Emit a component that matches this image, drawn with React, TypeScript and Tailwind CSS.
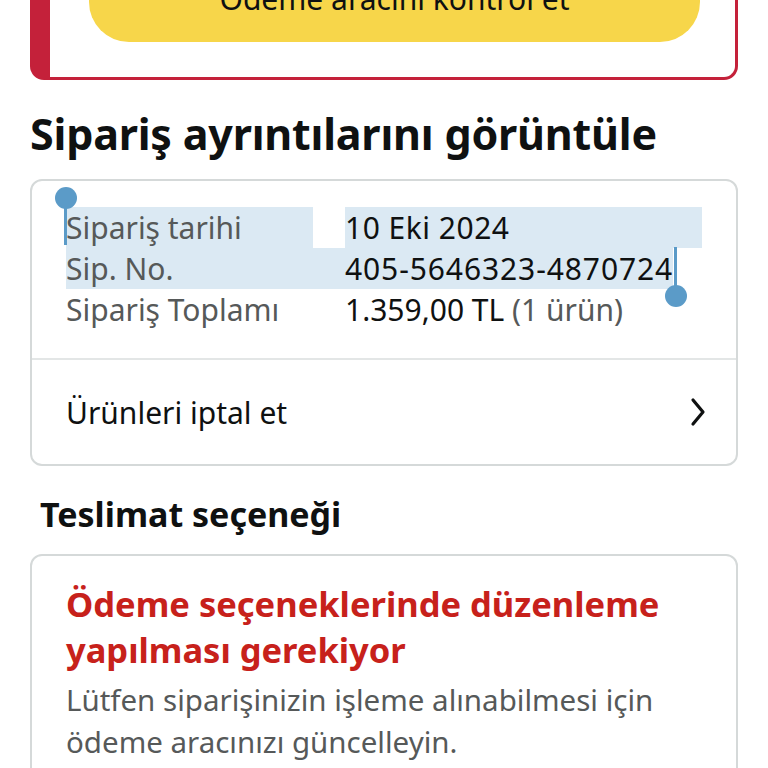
export default function App() {
  return (
    <div
      className="w-[768px] h-[768px] overflow-hidden bg-white px-[30px] text-[#0f1111]"
      style={{ fontFamily: '"Noto Sans", "Liberation Sans", sans-serif' }}
    >
      {/* payment alert (top is scrolled away) */}
      <div className="-mt-[40px] rounded-b-[14px] border-[3px] border-l-[20px] border-t-0 border-[#c4213a] pl-[39px] pr-[35px] pb-[35px]">
        <div className="flex h-[82px] items-end justify-center rounded-[40px] bg-[#f7d64a] pb-[28px] text-[30px] leading-none">
          Ödeme aracını kontrol et
        </div>
      </div>

      <h1 className="mt-[30px] text-[43px] font-bold leading-[48px] tracking-[-0.2px]">
        Sipariş ayrıntılarını görüntüle
      </h1>

      {/* order details */}
      <div className="relative mt-[21px] rounded-[12px] border-2 border-[#d5d9d9]">
        <div className="px-[34px] pt-[26px] pb-[28px] text-[30px] leading-[41px]">
          <div className="flex">
            <span className="w-[247px] bg-[#dbe9f3] text-[#565959]">Sipariş tarihi</span>
            <span className="ml-[32px] flex-1 bg-[#dbe9f3] pr-2 tracking-[0.5px]">10 Eki 2024</span>
          </div>
          <div className="flex w-fit bg-[#dbe9f3]">
            <span className="w-[279px] text-[#565959]">Sip. No.</span>
            <span className="tracking-[0.9px]">405-5646323-4870724</span>
          </div>
          <div className="flex">
            <span className="w-[279px] text-[#565959]">Sipariş Toplamı</span>
            <span>
              1.359,00 TL <span className="text-[#565959]">(1 ürün)</span>
            </span>
          </div>
        </div>
        <div className="flex h-[106px] items-center justify-between border-t-2 border-[#e3e6e6] pl-[34px] pr-[30px] text-[30px]">
          <span>Ürünleri iptal et</span>
          <svg width="16" height="30" viewBox="0 0 16 30" fill="none">
            <path d="M3 3l10 12L3 27" stroke="#0f1111" strokeWidth="3.2" strokeLinecap="round" strokeLinejoin="round" />
          </svg>
        </div>

        {/* selection handles */}
        <div className="absolute left-[23px] top-[6px] h-[22px] w-[22px] rounded-full bg-[#5b9bc8]" />
        <div className="absolute left-[32px] top-[16px] h-[48px] w-[3px] bg-[#5b9bc8]" />
        <div className="absolute left-[642px] top-[66px] h-[44px] w-[3px] bg-[#5b9bc8]" />
        <div className="absolute left-[633px] top-[104px] h-[22px] w-[22px] rounded-full bg-[#5b9bc8]" />
      </div>

      <h2 className="mt-[26px] pl-[10px] text-[34px] font-bold leading-[44px]">Teslimat seçeneği</h2>

      {/* delivery */}
      <div className="mt-[18px] rounded-[12px] border-2 border-[#d5d9d9] px-[34px] pt-[25px] pb-[30px]">
        <div className="text-[34.5px] font-bold leading-[46px] text-[#c7211b]">
          Ödeme seçeneklerinde düzenleme yapılması gerekiyor
        </div>
        <p className="mt-[6px] text-[29.5px] leading-[42px] text-[#565959]">
          Lütfen siparişinizin işleme alınabilmesi için ödeme aracınızı güncelleyin.
        </p>
      </div>
    </div>
  );
}
